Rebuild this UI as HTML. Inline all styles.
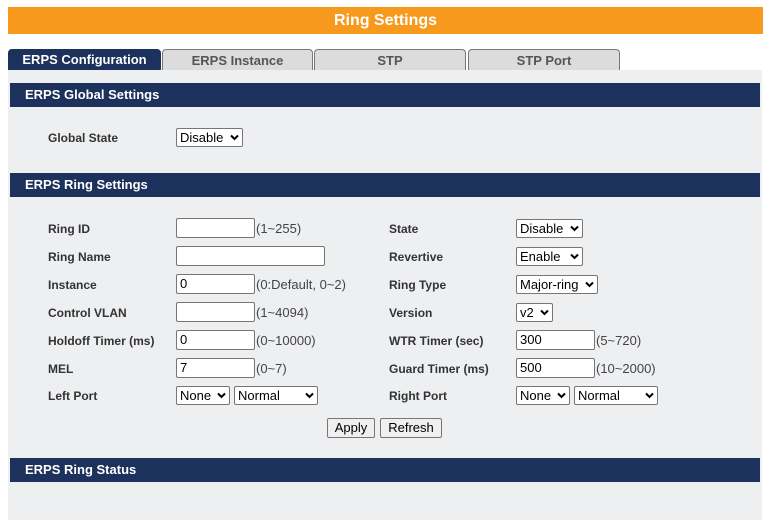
<!DOCTYPE html>
<html><head><meta charset="utf-8"><style>
*{box-sizing:border-box;margin:0;padding:0}
body{width:773px;height:527px;background:#fff;position:relative;font-family:"Liberation Sans",Arial,sans-serif;overflow:hidden}
.a{position:absolute}
.top{left:8px;top:7px;width:755px;height:27px;background:#f7991c;color:#fff;font-weight:bold;font-size:16px;text-align:center;line-height:27px}
.tab{top:49px;height:21px;font-weight:bold;font-size:13px;text-align:center;line-height:21px;border-radius:4px 4px 0 0}
.t0{background:#1c315c;color:#fff}
.t1{background:#dcdcdc;color:#555;border:1px solid #777;border-bottom:none}
.panel{left:8px;top:70px;width:754px;height:450px;background:#eeeff1}
.hd{left:10px;width:750px;height:24px;background:#1c315c;color:#fff;font-weight:bold;font-size:13px;line-height:24px;padding-left:15px}
.lb{font-size:12px;font-weight:bold;color:#333;line-height:14px}
.in{height:20px;background:#fff;border:1px solid #767676;border-radius:2px;font-size:13px;line-height:18px;padding-left:3px;color:#000}
.sel{height:19px;background:#fff;border:1px solid #767676;border-radius:2px;font-size:13px;line-height:17px;padding-left:3px;color:#000}
.sel svg{position:absolute;right:3px;top:5px}
.sx{font-size:13px;color:#444;line-height:14px}
.btn{height:20px;background:#efefef;border:1px solid #767676;border-radius:2px;font-size:13px;line-height:18px;text-align:center;color:#000}
</style></head><body>
<div class="a top">Ring Settings</div>
<div class="a tab t0" style="left:8px;width:153px">ERPS Configuration</div>
<div class="a tab t1" style="left:162px;width:151px">ERPS Instance</div>
<div class="a tab t1" style="left:314px;width:152px">STP</div>
<div class="a tab t1" style="left:468px;width:152px">STP Port</div>
<div class="a panel"></div>
<div class="a hd" style="top:83px">ERPS Global Settings</div>
<div class="a hd" style="top:173px">ERPS Ring Settings</div>
<div class="a hd" style="top:458px">ERPS Ring Status</div>

<div class="a lb" style="left:48px;top:131px">Global State</div>

<div class="a lb" style="left:48px;top:222px">Ring ID</div>
<div class="a lb" style="left:48px;top:250px">Ring Name</div>
<div class="a lb" style="left:48px;top:278px">Instance</div>
<div class="a lb" style="left:48px;top:306px">Control VLAN</div>
<div class="a lb" style="left:48px;top:334px">Holdoff Timer (ms)</div>
<div class="a lb" style="left:48px;top:362px">MEL</div>
<div class="a lb" style="left:48px;top:389px">Left Port</div>

<div class="a lb" style="left:389px;top:222px">State</div>
<div class="a lb" style="left:389px;top:250px">Revertive</div>
<div class="a lb" style="left:389px;top:278px">Ring Type</div>
<div class="a lb" style="left:389px;top:306px">Version</div>
<div class="a lb" style="left:389px;top:334px">WTR Timer (sec)</div>
<div class="a lb" style="left:389px;top:362px">Guard Timer (ms)</div>
<div class="a lb" style="left:389px;top:389px">Right Port</div>

<div class="a in" style="left:176px;top:218px;width:79px"></div><div class="a sx" style="left:256px;top:222px">(1~255)</div>
<div class="a in" style="left:176px;top:246px;width:149px"></div>
<div class="a in" style="left:176px;top:274px;width:79px">0</div><div class="a sx" style="left:256px;top:278px">(0:Default, 0~2)</div>
<div class="a in" style="left:176px;top:302px;width:79px"></div><div class="a sx" style="left:256px;top:306px">(1~4094)</div>
<div class="a in" style="left:176px;top:330px;width:79px">0</div><div class="a sx" style="left:256px;top:334px">(0~10000)</div>
<div class="a in" style="left:176px;top:358px;width:79px">7</div><div class="a sx" style="left:256px;top:362px">(0~7)</div>

<div class="a in" style="left:516px;top:330px;width:79px">300</div><div class="a sx" style="left:596px;top:334px">(5~720)</div>
<div class="a in" style="left:516px;top:358px;width:79px">500</div><div class="a sx" style="left:596px;top:362px">(10~2000)</div>

<div class="a sel" style="left:176px;top:128px;width:67px">Disable<svg width="9" height="7" viewBox="0 0 9 7"><path d="M1 1.5L4.5 5L8 1.5" stroke="#000" stroke-width="2" fill="none"/></svg></div>
<div class="a sel" style="left:176px;top:386px;width:54px">None<svg width="9" height="7" viewBox="0 0 9 7"><path d="M1 1.5L4.5 5L8 1.5" stroke="#000" stroke-width="2" fill="none"/></svg></div>
<div class="a sel" style="left:234px;top:386px;width:84px">Normal<svg width="9" height="7" viewBox="0 0 9 7"><path d="M1 1.5L4.5 5L8 1.5" stroke="#000" stroke-width="2" fill="none"/></svg></div>

<div class="a sel" style="left:516px;top:219px;width:67px">Disable<svg width="9" height="7" viewBox="0 0 9 7"><path d="M1 1.5L4.5 5L8 1.5" stroke="#000" stroke-width="2" fill="none"/></svg></div>
<div class="a sel" style="left:516px;top:247px;width:67px">Enable<svg width="9" height="7" viewBox="0 0 9 7"><path d="M1 1.5L4.5 5L8 1.5" stroke="#000" stroke-width="2" fill="none"/></svg></div>
<div class="a sel" style="left:516px;top:275px;width:82px">Major-ring<svg width="9" height="7" viewBox="0 0 9 7"><path d="M1 1.5L4.5 5L8 1.5" stroke="#000" stroke-width="2" fill="none"/></svg></div>
<div class="a sel" style="left:516px;top:303px;width:37px">v2<svg width="9" height="7" viewBox="0 0 9 7"><path d="M1 1.5L4.5 5L8 1.5" stroke="#000" stroke-width="2" fill="none"/></svg></div>
<div class="a sel" style="left:516px;top:386px;width:54px">None<svg width="9" height="7" viewBox="0 0 9 7"><path d="M1 1.5L4.5 5L8 1.5" stroke="#000" stroke-width="2" fill="none"/></svg></div>
<div class="a sel" style="left:574px;top:386px;width:84px">Normal<svg width="9" height="7" viewBox="0 0 9 7"><path d="M1 1.5L4.5 5L8 1.5" stroke="#000" stroke-width="2" fill="none"/></svg></div>

<div class="a btn" style="left:327px;top:418px;width:48px">Apply</div>
<div class="a btn" style="left:380px;top:418px;width:62px">Refresh</div>
</body></html>
